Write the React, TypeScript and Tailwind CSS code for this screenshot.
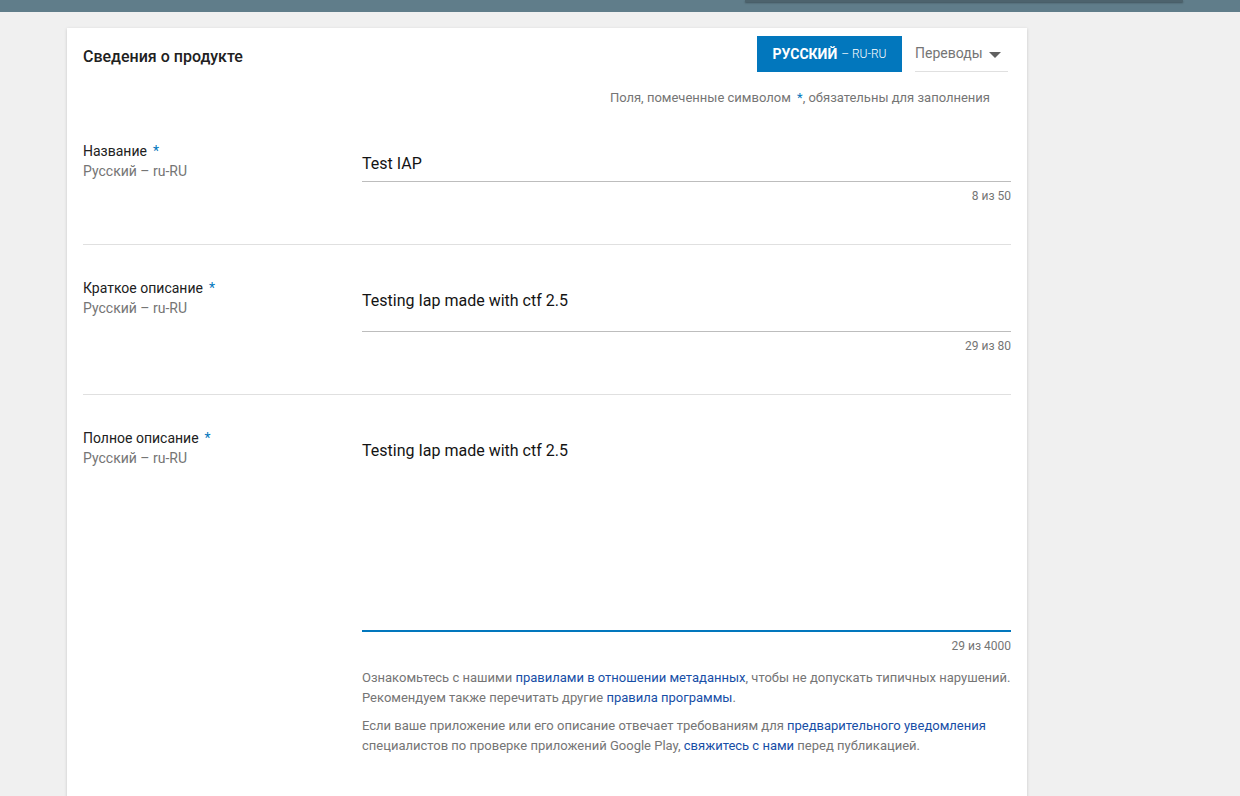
import React from "react";

const font = { fontFamily: "Roboto, 'Noto Sans', Arial, sans-serif" };

function Req() {
  return <span className="ml-[6px] text-[#0277bd]">*</span>;
}

interface RowProps {
  label: string;
  value: string;
  count: string;
  boxH: string;
  focused?: boolean;
  last?: boolean;
  children?: React.ReactNode;
}

function Row({ label, value, count, boxH, focused, last, children }: RowProps) {
  return (
    <div className={`flex ${last ? "pt-[33px] pb-10" : "pt-[33px] pb-10 border-b border-[#e0e0e0]"}`}>
      <div className="w-[279px] shrink-0 text-[14px] leading-5">
        <div className="text-[#212121]">
          {label}
          <Req />
        </div>
        <div className="text-[#757575]">Русский – ru-RU</div>
      </div>
      <div className="flex-1 pt-[5px]">
        <div
          className={`${boxH} pt-2 text-[16px] leading-5 text-[#141414] ${
            focused ? "border-b-2 border-[#0277bd]" : "border-b border-[#bdbdbd]"
          }`}
        >
          {value}
        </div>
        <div className="mt-[6px] text-right text-[12px] leading-4 text-[#757575]">{count}</div>
        {children}
      </div>
    </div>
  );
}

export default function App() {
  return (
    <div className="min-h-[796px] bg-[#f0f0f0] overflow-hidden" style={font}>
      <div className="h-3 bg-[#607d8a]">
        <div className="ml-[745px] w-[438px] h-[2px] bg-[#4d636d] shadow-[0_1px_2px_rgba(0,0,0,0.35)]" />
      </div>

      <div className="ml-[67px] mt-4 w-[960px] min-h-[800px] bg-white shadow-[0_1px_3px_rgba(0,0,0,0.18)] px-4">
        {/* Header */}
        <div className="flex items-center justify-between pt-2">
          <h2 className="mt-[5px] text-[16px] font-medium text-[#212121]">Сведения о продукте</h2>
          <div className="flex items-center mr-[3px]">
            <button className="w-[145px] h-9 bg-[#0277bd] text-white flex items-center justify-center">
              <span className="text-[14px] font-bold">РУССКИЙ</span>
              <span className="ml-[4px] text-[12px] font-light">– RU-RU</span>
            </button>
            <div className="ml-[13px] w-[93px] h-9 border-b border-[#e0e0e0] flex items-center justify-between">
              <span className="text-[14px] text-[#757575]">Переводы</span>
              <svg width="12" height="6" viewBox="0 0 12 6" className="mr-[7px] mt-[2px]">
                <path d="M0 0 L12 0 L6 6 Z" fill="#616161" />
              </svg>
            </div>
          </div>
        </div>

        <div className="mt-4 mr-[21px] text-right text-[13px] leading-5 text-[#757575]">
          Поля, помеченные символом <span className="ml-[3px] text-[#0277bd]">*</span>, обязательны для заполнения
        </div>

        <Row label="Название" value="Test IAP" count="8 из 50" boxH="h-[36px]" />
        <Row
          label="Краткое описание"
          value="Testing Iap made with ctf 2.5"
          count="29 из 80"
          boxH="h-[49px]"
        />
        <Row
          label="Полное описание"
          value="Testing Iap made with ctf 2.5"
          count="29 из 4000"
          boxH="h-[199px]"
          focused
          last
        >
          <div className="mt-[14px] text-[13px] leading-5 text-[#757575]">
            <p>
              Ознакомьтесь с нашими <a className="text-[#174ea6]">правилами в отношении метаданных</a>, чтобы не
              допускать типичных нарушений. Рекомендуем также перечитать другие{" "}
              <a className="text-[#174ea6]">правила программы</a>.
            </p>
            <p className="mt-2">
              Если ваше приложение или его описание отвечает требованиям для{" "}
              <a className="text-[#174ea6]">предварительного уведомления</a> специалистов по проверке приложений
              Google Play, <a className="text-[#174ea6]">свяжитесь с нами</a> перед публикацией.
            </p>
          </div>
        </Row>
      </div>
    </div>
  );
}
